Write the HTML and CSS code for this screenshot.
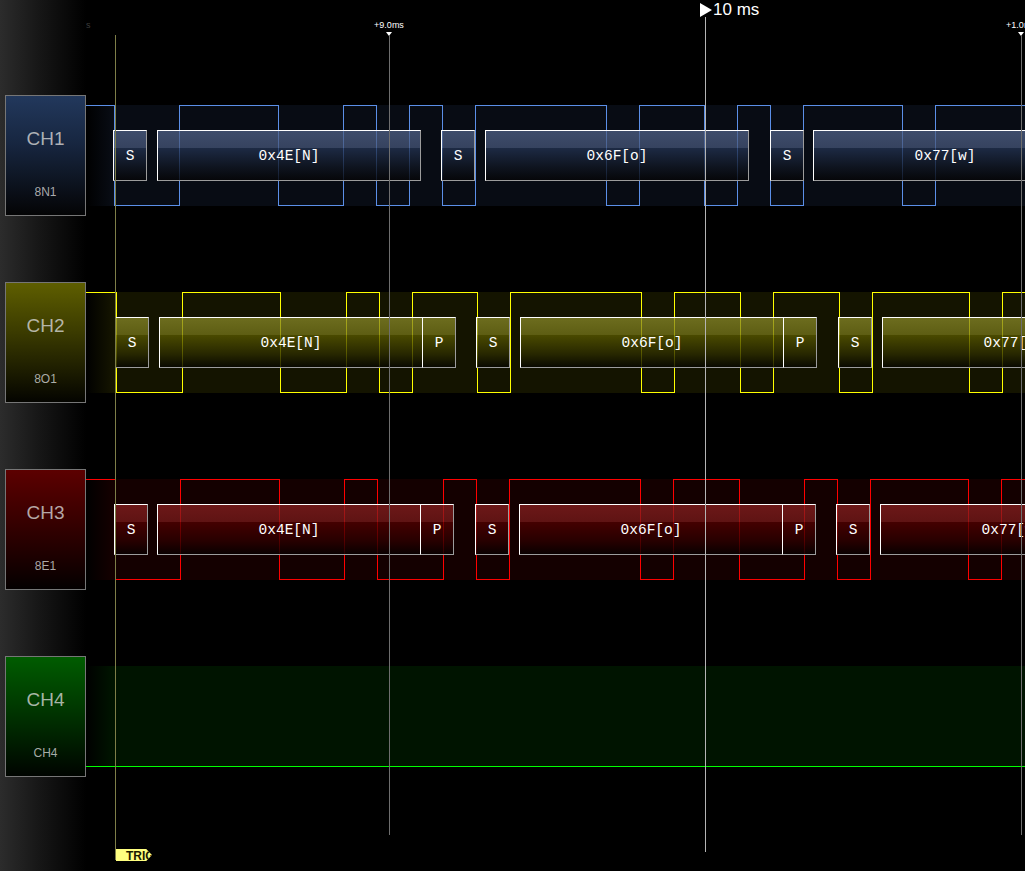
FILE: index.html
```html
<!DOCTYPE html>
<html>
<head>
<meta charset="utf-8">
<link rel="stylesheet" href="styles.css">
</head>
<body>
<div class="scope">
  <aside class="labels">
    <div class="chan-label l1"><span class="ch-name">CH1</span><span class="ch-mode">8N1</span></div>
    <div class="chan-label l2"><span class="ch-name">CH2</span><span class="ch-mode">8O1</span></div>
    <div class="chan-label l3"><span class="ch-name">CH3</span><span class="ch-mode">8E1</span></div>
    <div class="chan-label l4"><span class="ch-name">CH4</span><span class="ch-mode">CH4</span></div>
  </aside>
  <main class="plot">
    <div class="lanes">
      <div class="lane c1">
        <div class="band"></div>
        <svg class="wave" viewBox="86 104 939 103" width="939" height="103">
          <path class="trace" d="M86,105.5 H114.5 V205.5 H179.5 V105.5 H278.5 V205.5 H343.5 V105.5 H376.5 V205.5 H409.5 V105.5 H442.5 V205.5 H475.5 V105.5 H606.5 V205.5 H639.5 V105.5 H704.5 V205.5 H737.5 V105.5 H770.5 V205.5 H803.5 V105.5 H902.5 V205.5 H935.5 V105.5 H1026"/>
        </svg>
        <div class="dec" style="left:27px;width:34px">S</div>
        <div class="dec" style="left:71px;width:264px">0x4E[N]</div>
        <div class="dec" style="left:355px;width:34px">S</div>
        <div class="dec" style="left:399px;width:264px">0x6F[o]</div>
        <div class="dec" style="left:684px;width:34px">S</div>
        <div class="dec" style="left:727px;width:264px">0x77[w]</div>
      </div>
      <div class="lane c2">
        <div class="band"></div>
        <svg class="wave" viewBox="86 291 939 103" width="939" height="103">
          <path class="trace" d="M86,292.5 H116.5 V392.5 H182.5 V292.5 H280.5 V392.5 H346.5 V292.5 H379.5 V392.5 H412.5 V292.5 H477.5 V392.5 H510.5 V292.5 H641.5 V392.5 H674.5 V292.5 H740.5 V392.5 H773.5 V292.5 H839.5 V392.5 H872.5 V292.5 H969.5 V392.5 H1002.5 V292.5 H1026"/>
        </svg>
        <div class="dec" style="left:29px;width:34px">S</div>
        <div class="dec" style="left:73px;width:264px">0x4E[N]</div>
        <div class="dec" style="left:336px;width:34px">P</div>
        <div class="dec" style="left:390px;width:34px">S</div>
        <div class="dec" style="left:434px;width:264px">0x6F[o]</div>
        <div class="dec" style="left:697px;width:34px">P</div>
        <div class="dec" style="left:752px;width:34px">S</div>
        <div class="dec" style="left:796px;width:264px">0x77[w]</div>
      </div>
      <div class="lane c3">
        <div class="band"></div>
        <svg class="wave" viewBox="86 478 939 103" width="939" height="103">
          <path class="trace" d="M86,479.5 H115.5 V579.5 H180.5 V479.5 H279.5 V579.5 H344.5 V479.5 H377.5 V579.5 H443.5 V479.5 H476.5 V579.5 H509.5 V479.5 H640.5 V579.5 H673.5 V479.5 H739.5 V579.5 H804.5 V479.5 H837.5 V579.5 H870.5 V479.5 H968.5 V579.5 H1001.5 V479.5 H1026"/>
        </svg>
        <div class="dec" style="left:28px;width:34px">S</div>
        <div class="dec" style="left:71px;width:264px">0x4E[N]</div>
        <div class="dec" style="left:334px;width:34px">P</div>
        <div class="dec" style="left:389px;width:34px">S</div>
        <div class="dec" style="left:433px;width:264px">0x6F[o]</div>
        <div class="dec" style="left:696px;width:34px">P</div>
        <div class="dec" style="left:750px;width:34px">S</div>
        <div class="dec" style="left:794px;width:264px">0x77[w]</div>
      </div>
      <div class="lane c4">
        <div class="band"></div>
        <svg class="wave" viewBox="86 665 939 103" width="939" height="103">
          <path class="trace" d="M86,766.5 H1026"/>
        </svg>
      </div>
    </div>

    <span class="tick-label dim" style="left:0px">s</span>
    <span class="tick-label" style="left:273px">+9.0ms</span>
    <span class="tick-mark" style="left:300px"></span>
    <span class="tick-label" style="left:905px">+1.0ms</span>
    <span class="tick-mark" style="left:932px"></span>

    <span class="cursor-flag"></span>
    <span class="cursor-label">10 ms</span>

    <span class="vline trig-line"></span>
    <span class="vline grid-line" style="left:303px"></span>
    <span class="vline main-line"></span>
    <span class="vline grid-line" style="left:935px"></span>

    <span class="trig-tag">TRIG</span>
  </main>
</div>
</body>
</html>
```
FILE: styles.css
```css
html, body {
  margin: 0;
  padding: 0;
  background: #000;
  overflow: hidden;
}

.scope {
  display: flex;
  width: 1025px;
  height: 871px;
  background: #000;
  font-family: "Liberation Sans", Arial, sans-serif;
}

/* ---------- left channel labels ---------- */
.labels {
  flex: 0 0 86px;
  box-sizing: border-box;
  padding: 95px 0 0 5px;
  display: flex;
  flex-direction: column;
  gap: 66px;
  background: linear-gradient(to right, #2c2c2c 0, #161616 40px, #000 86px);
}

.chan-label {
  width: 81px;
  height: 121px;
  box-sizing: border-box;
  border: 1px solid #767676;
  display: flex;
  flex-direction: column;
  align-items: center;
  color: rgba(215, 215, 215, 0.78);
}

.l1 { background: linear-gradient(to bottom, #22385c 0%, #172640 40%, #040405 100%); }
.l2 { background: linear-gradient(to bottom, #5e5e00 0%, #3c3c00 40%, #040400 100%); }
.l3 { background: linear-gradient(to bottom, #5c0000 0%, #3a0000 40%, #040000 100%); }
.l4 { background: linear-gradient(to bottom, #005c00 0%, #003a00 40%, #000400 100%); }

.ch-name {
  margin-top: 33px;
  font-size: 19px;
  line-height: 20px;
}

.ch-mode {
  margin-top: 36px;
  font-size: 12px;
  line-height: 14px;
}

/* ---------- plot area ---------- */
.plot {
  flex: 1 1 auto;
  position: relative;
  overflow: hidden;
}

.lanes {
  display: flex;
  flex-direction: column;
  gap: 84px;
  padding-top: 104px;
}

.lane {
  position: relative;
  height: 103px;
}

.band {
  margin-top: 1px;
  height: 101px;
}

.c1 .band { background: linear-gradient(to right, #000 0, #080c14 26px); }
.c2 .band { background: linear-gradient(to right, #000 0, #141400 26px); }
.c3 .band { background: linear-gradient(to right, #000 0, #140000 26px); }
.c4 .band { background: linear-gradient(to right, #000 0, #001400 26px); }

.wave {
  position: absolute;
  left: 0;
  top: 0;
  display: block;
}

.trace {
  fill: none;
  stroke-width: 1;
  shape-rendering: crispEdges;
}

.c1 .trace { stroke: #5b8fe8; }
.c2 .trace { stroke: #ffff00; }
.c3 .trace { stroke: #ff0000; }
.c4 .trace { stroke: #00ff00; }

/* decoded frame boxes */
.dec {
  position: absolute;
  top: 26px;
  height: 51px;
  box-sizing: border-box;
  border: 1px solid;
  border-color: #ffffff #9c9c9c #9c9c9c #ffffff;
  display: flex;
  align-items: center;
  justify-content: center;
  font-family: "Liberation Mono", "DejaVu Sans Mono", monospace;
  font-size: 14.5px;
  color: #fff;
  white-space: nowrap;
}

.c1 .dec {
  background: linear-gradient(to bottom,
    rgba(80, 98, 136, 0.75) 0,
    rgba(69, 85, 120, 0.75) 17px,
    rgba(36, 52, 84, 0.75) 17px,
    rgba(16, 22, 34, 0.8) 36px,
    rgba(6, 6, 8, 0.85) 100%);
}

.c2 .dec {
  background: linear-gradient(to bottom,
    rgba(138, 138, 40, 0.75) 0,
    rgba(118, 118, 26, 0.75) 17px,
    rgba(92, 92, 0, 0.75) 17px,
    rgba(44, 44, 0, 0.8) 36px,
    rgba(8, 8, 0, 0.85) 100%);
}

.c3 .dec {
  background: linear-gradient(to bottom,
    rgba(138, 32, 32, 0.75) 0,
    rgba(120, 26, 26, 0.75) 17px,
    rgba(84, 0, 0, 0.75) 17px,
    rgba(44, 0, 0, 0.8) 36px,
    rgba(8, 0, 0, 0.85) 100%);
}

/* ---------- ruler / cursors (overlays) ---------- */
.tick-label {
  position: absolute;
  top: 20px;
  width: 60px;
  text-align: center;
  font-size: 9px;
  line-height: 10px;
  color: #fff;
  white-space: nowrap;
}

.tick-label.dim {
  width: 7px;
  text-align: left;
  color: #3c3c3c;
}

.tick-mark {
  position: absolute;
  top: 32px;
  width: 0;
  height: 0;
  border-top: 4px solid #fff;
  border-left: 3px solid transparent;
  border-right: 3px solid transparent;
}

.cursor-flag {
  position: absolute;
  left: 614px;
  top: 3px;
  width: 0;
  height: 0;
  border-left: 12px solid #fff;
  border-top: 7px solid transparent;
  border-bottom: 7px solid transparent;
}

.cursor-label {
  position: absolute;
  left: 627px;
  top: 1px;
  font-size: 17px;
  line-height: 17px;
  color: #fff;
  white-space: nowrap;
}

.vline {
  position: absolute;
  width: 1px;
}

.trig-line {
  left: 29px;
  top: 35px;
  height: 825px;
  background: #7e7e48;
}

.grid-line {
  top: 35px;
  height: 800px;
  background: #6e6e6e;
}

.main-line {
  left: 619px;
  top: 17px;
  height: 835px;
  background: #b4b4b4;
}

.trig-tag {
  position: absolute;
  left: 30px;
  top: 849px;
  width: 36px;
  height: 12px;
  box-sizing: border-box;
  padding-left: 10px;
  background: #ffff80;
  clip-path: polygon(0 0, 84% 0, 100% 50%, 84% 100%, 0 100%);
  color: #1a1a00;
  font-size: 12px;
  font-weight: bold;
  line-height: 14px;
  overflow: hidden;
  white-space: nowrap;
}
```
